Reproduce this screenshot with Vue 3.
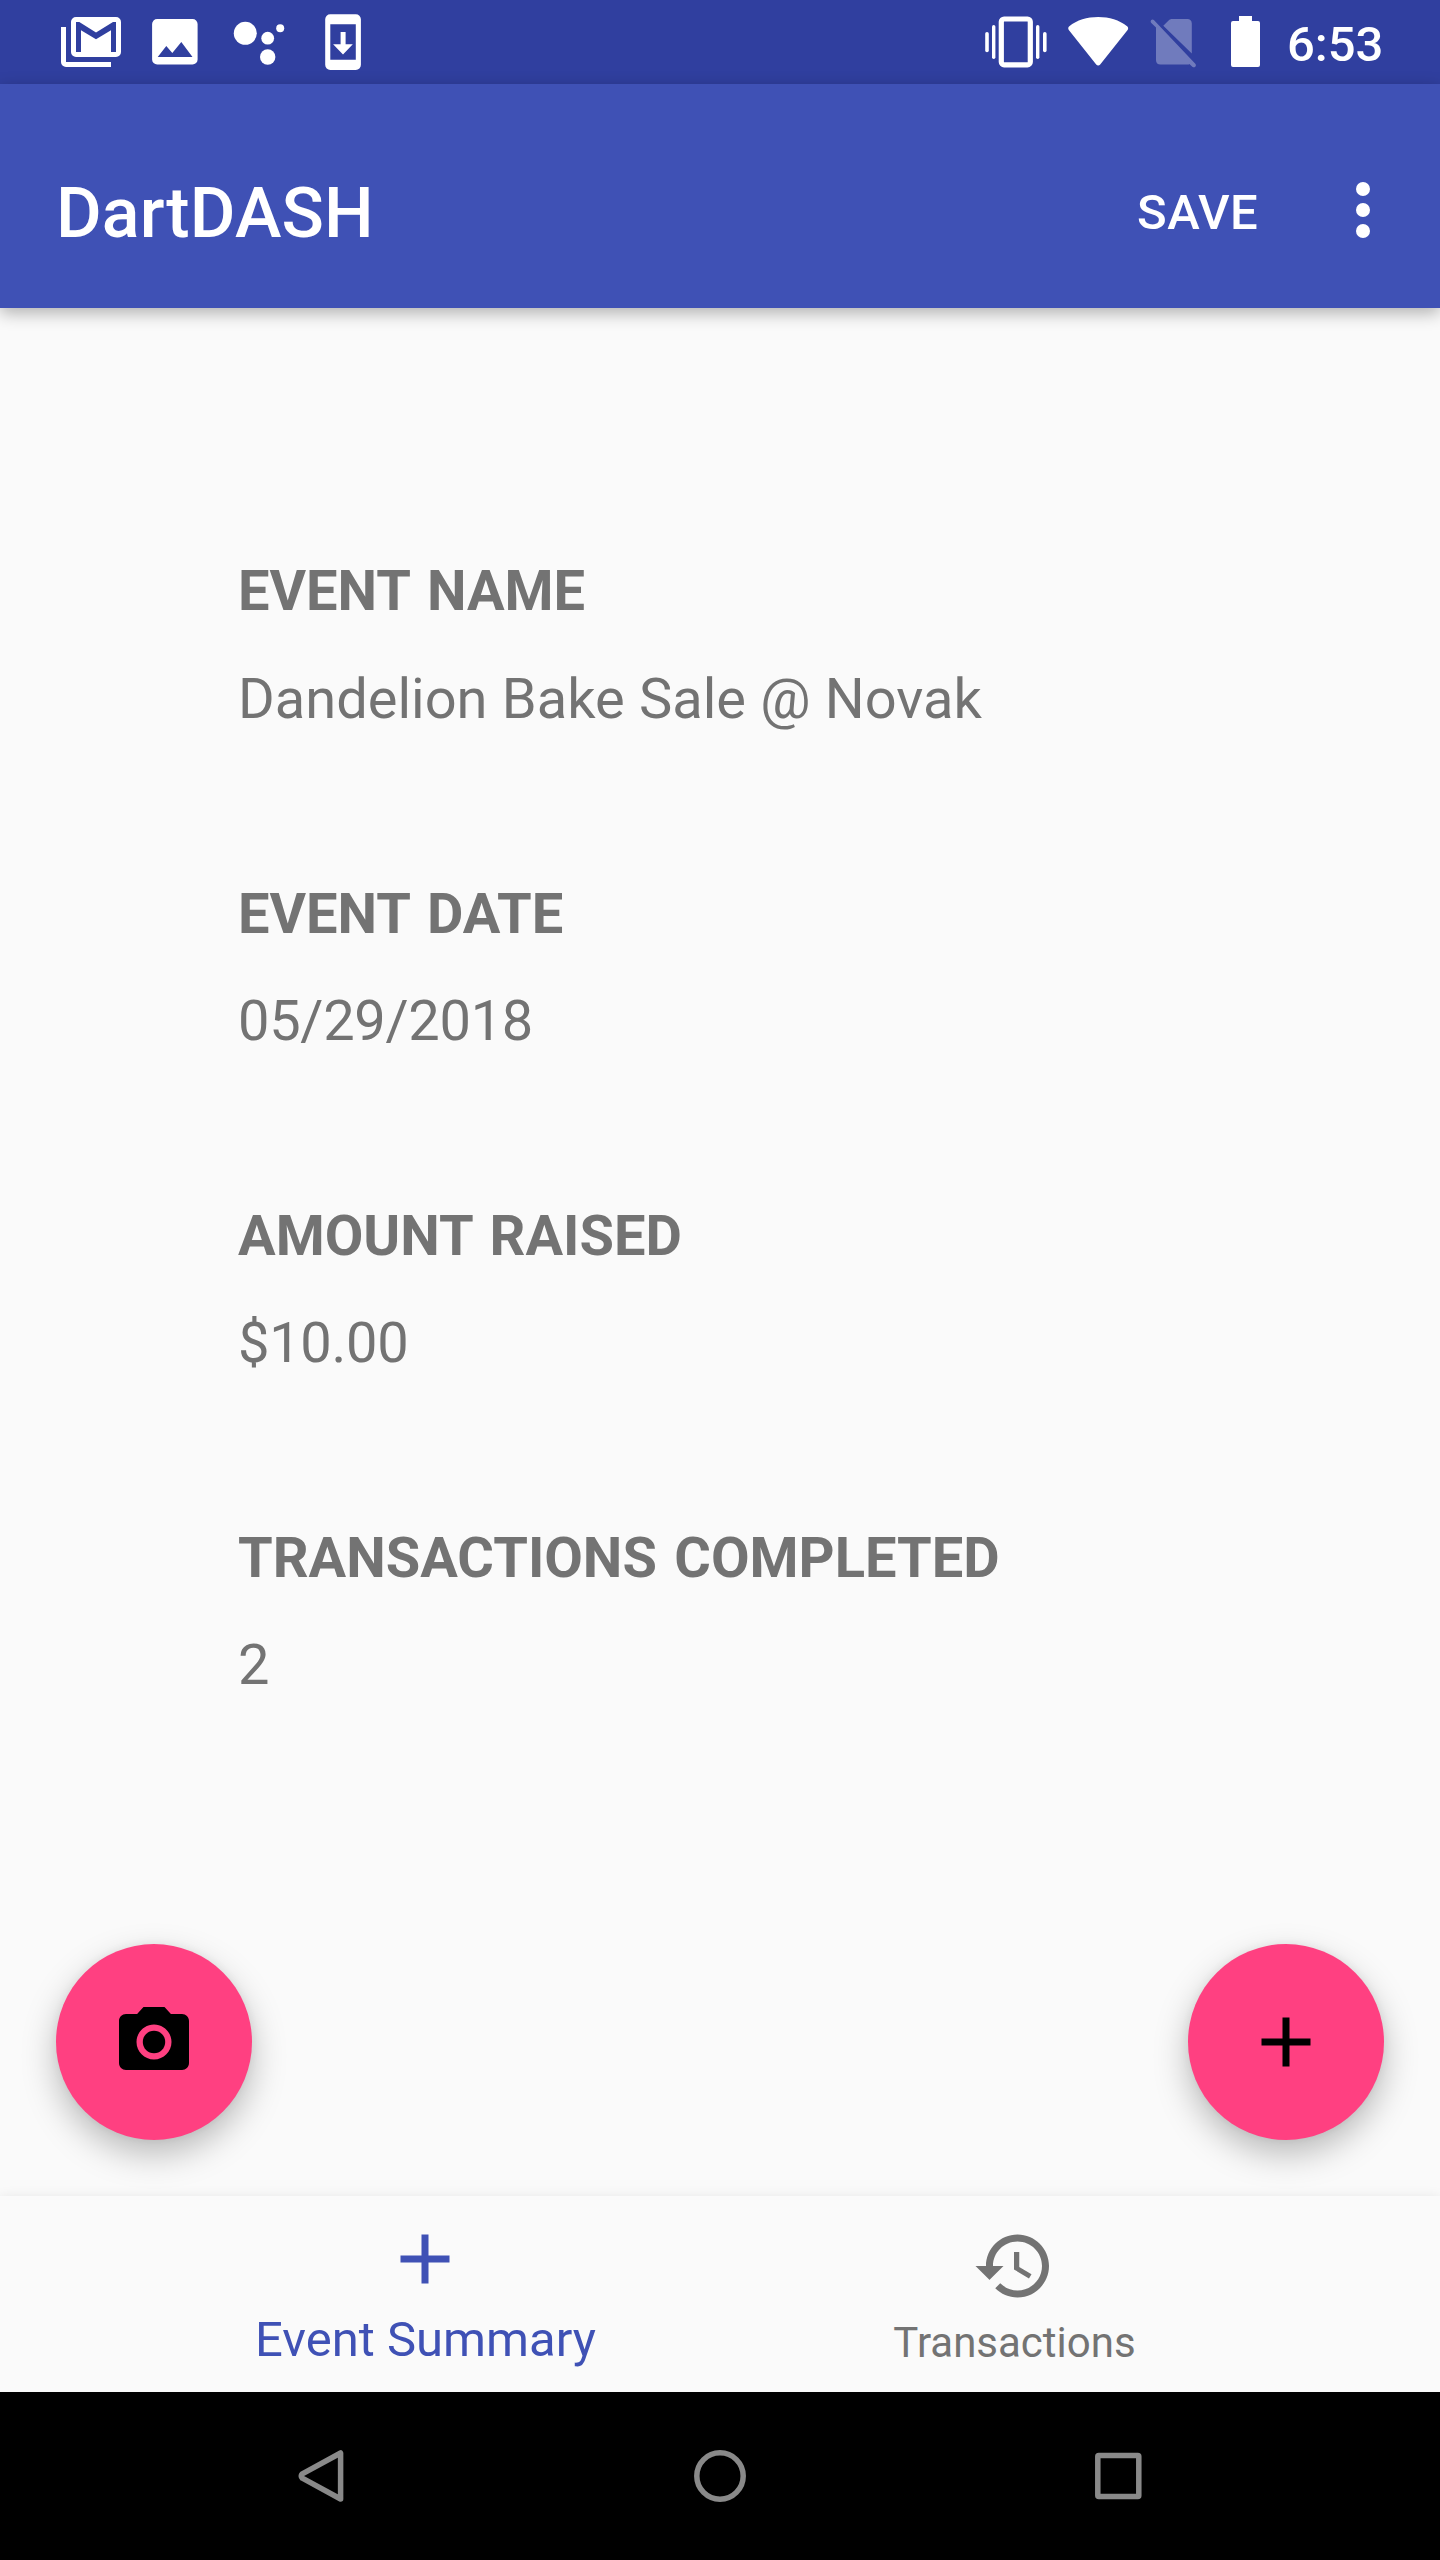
<script setup>
const fields = [
  { label: 'EVENT NAME', value: 'Dandelion Bake Sale @ Novak' },
  { label: 'EVENT DATE', value: '05/29/2018', numeric: true },
  { label: 'AMOUNT RAISED', value: '$10.00', numeric: true },
  { label: 'TRANSACTIONS COMPLETED', value: '2', numeric: true },
]
</script>

<template>
  <div class="screen">
    <div class="status-bar">
      <div class="notifications">
        <svg width="84" height="84" viewBox="49 0 84 84">
          <path fill="#fff" d="M61 27h5v35h45v5H66a5 5 0 0 1-5-5z" />
          <path fill="#fff" fill-rule="evenodd" d="M76 17h40a5 5 0 0 1 5 5v30a5 5 0 0 1-5 5H76a5 5 0 0 1-5-5V22a5 5 0 0 1 5-5zM76 22v30h5V30.3l15 9 15-9V52h5V22h-3L96 32.5 79.3 22z" />
        </svg>
        <svg width="84" height="84" viewBox="133 0 84 84">
          <path fill="#fff" fill-rule="evenodd" d="M157.200 19h35.300a5.100 5.100 0 0 1 5.100 5.100v35.400a5.100 5.100 0 0 1-5.100 5.100h-35.300a5.100 5.100 0 0 1-5.100-5.100V24.100a5.100 5.100 0 0 1 5.100-5.100zM157.700 57h34.800l-11.200-15-9 11-6-7z" />
        </svg>
        <svg width="84" height="84" viewBox="217 0 84 84" fill="#fff">
          <circle cx="245.300" cy="33.300" r="11.500" />
          <circle cx="267.700" cy="38.200" r="6.400" />
          <circle cx="280.200" cy="28.200" r="4" />
          <circle cx="267.700" cy="57" r="7.700" />
        </svg>
        <svg width="84" height="84" viewBox="301 0 84 84">
          <path fill="#fff" fill-rule="evenodd" d="M330.300 14.200h25.500a5.100 5.100 0 0 1 5.100 5.100v45.500a5.100 5.100 0 0 1-5.100 5.100h-25.500a5.100 5.100 0 0 1-5.100-5.100V19.300a5.100 5.100 0 0 1 5.100-5.100zM330.300 24.300v35.400h25.500V24.300z" />
          <path fill="#fff" d="M340.600 32h5v12.300h7.200L343 54.400l-9.900-10.100h7.500z" />
        </svg>
      </div>
      <div class="system">
        <svg width="80" height="84" viewBox="976 0 80 84" fill="#fff">
          <rect x="1001.300" y="19" width="29" height="45.800" rx="2.800" fill="none" stroke="#fff" stroke-width="5.200" />
          <rect x="992" y="25" width="3.400" height="34" rx="1.700" />
          <rect x="985.200" y="32" width="3.600" height="20.300" rx="1.800" />
          <rect x="1036" y="25" width="3.400" height="34" rx="1.700" />
          <rect x="1043" y="32" width="3.600" height="20.300" rx="1.800" />
        </svg>
        <svg width="84" height="84" viewBox="1056 0 84 84">
          <path fill="#fff" d="M1069.300 26.200C1077 20 1087 17 1098.200 17s21 3 28.900 9.200c1.200 1 1.400 2.500.5 3.700l-27.400 34.600c-1.100 1.400-2.900 1.400-4 0l-27.400-34.600c-.9-1.200-.7-2.700.5-3.700z" />
        </svg>
        <svg width="70" height="84" viewBox="1140 0 70 84" opacity=".31">
          <path fill="#fff" d="M1163.300 25.700l5.300-5.200c1-1 2-1.500 3.400-1.500h15.400c2.600 0 4.400 1.800 4.400 4.400v30.200zM1156 27.600l-4.700-4.600c-1.900-2 .8-4.700 2.800-2.800l41.200 43.500c1.800 2-.8 4.900-3 3l-2.900-2.800c-.5.500-1 .7-1.600.7h-27.400c-2.600 0-4.400-1.800-4.400-4.400z" />
        </svg>
        <svg width="71" height="84" viewBox="1210 0 71 84">
          <path fill="#fff" d="M1239 16h13v5h6a2 2 0 0 1 2 2v42a2 2 0 0 1-2 2h-25a2 2 0 0 1-2-2V23a2 2 0 0 1 2-2h6z" />
        </svg>
        <span class="clock">6:53</span>
      </div>
    </div>

    <header class="app-bar">
      <h1>DartDASH</h1>
      <span class="save">SAVE</span>
      <svg class="more" width="14" height="56" viewBox="0 0 14 56" fill="#fff">
        <circle cx="7" cy="7" r="7" />
        <circle cx="7" cy="28" r="7" />
        <circle cx="7" cy="49" r="7" />
      </svg>
    </header>

    <main class="content">
      <section v-for="f in fields" :key="f.label" class="field">
        <div class="label">{{ f.label }}</div>
        <div class="value" :class="{ numeric: f.numeric }">{{ f.value }}</div>
      </section>
      <div class="fabs">
        <button class="fab">
          <svg width="84" height="84" viewBox="0 0 24 24">
            <circle cx="12" cy="12" r="3.200" />
            <path d="M9 2L7.170 4H4c-1.100 0-2 .9-2 2v12c0 1.100.9 2 2 2h16c1.100 0 2-.9 2-2V6c0-1.100-.9-2-2-2h-3.170L15 2H9zm3 15c-2.760 0-5-2.240-5-5s2.240-5 5-5 5 2.240 5 5-2.240 5-5 5z" />
          </svg>
        </button>
        <button class="fab">
          <svg width="84" height="84" viewBox="0 0 24 24">
            <path d="M19 13h-6v6h-2v-6H5v-2h6V5h2v6h6v2z" />
          </svg>
        </button>
      </div>
    </main>

    <nav class="tabs">
      <div class="tab active">
        <svg width="84" height="84" viewBox="0 0 24 24" fill="currentColor">
          <path d="M19 13h-6v6h-2v-6H5v-2h6V5h2v6h6v2z" />
        </svg>
        <span>Event Summary</span>
      </div>
      <div class="tab">
        <svg width="84" height="84" viewBox="0 0 24 24" fill="currentColor">
          <path d="M13 3c-4.970 0-9 4.030-9 9H1l3.890 3.890.07.14L9 12H6c0-3.870 3.130-7 7-7s7 3.130 7 7-3.130 7-7 7c-1.930 0-3.680-.79-4.940-2.060l-1.420 1.420C8.270 19.990 10.510 21 13 21c4.970 0 9-4.030 9-9s-4.030-9-9-9zm-1 5v5l4.280 2.540.72-1.210-3.500-2.080V8H12z" />
        </svg>
        <span>Transactions</span>
      </div>
    </nav>

    <div class="system-nav">
      <div class="key">
        <svg width="56" height="56" viewBox="294 2448 56 56">
          <path d="M340.600 2453v46L302.300 2478.200q-2.200-2.200 0-4.400z" class="outline" />
        </svg>
      </div>
      <div class="key">
        <svg width="56" height="56" viewBox="0 0 56 56">
          <circle cx="28" cy="28" r="23.200" class="outline" />
        </svg>
      </div>
      <div class="key">
        <svg width="56" height="56" viewBox="0 0 56 56">
          <rect x="7.800" y="7.600" width="41" height="41" rx="1" class="outline" />
        </svg>
      </div>
    </div>
  </div>
</template>

<style>
body {
  margin: 0;
}
</style>

<style scoped>
.screen {
  width: 1440px;
  height: 2560px;
  display: flex;
  flex-direction: column;
  overflow: hidden;
  background: #fafafa;
  font-family: Roboto, sans-serif;
}
svg {
  display: block;
  flex: none;
}
.status-bar {
  height: 84px;
  flex: none;
  display: flex;
  justify-content: space-between;
  padding: 0 56px 0 49px;
  background: #303f9f;
}
.notifications,
.system {
  display: flex;
}
.system {
  width: 408px;
}
.clock {
  margin-left: 6px;
  padding-top: 16px;
  font-size: 49px;
  line-height: 58px;
  font-weight: 500;
  color: #fff;
}
.app-bar {
  height: 224px;
  flex: none;
  display: flex;
  align-items: flex-start;
  box-sizing: border-box;
  padding: 0 70px 0 56px;
  background: #3f51b5;
  color: #fff;
  box-shadow: 0 5px 16px rgba(0, 0, 0, 0.3);
  z-index: 1;
}
h1 {
  margin: 88px auto 0 0;
  font-size: 70px;
  line-height: 82px;
  font-weight: 500;
  letter-spacing: 0.15px;
}
.save {
  margin: 100px 98px 0 0;
  font-size: 49px;
  line-height: 58px;
  font-weight: 500;
  letter-spacing: 0.35px;
}
.more {
  margin-top: 98px;
}
.content {
  flex: 1;
  display: flex;
  flex-direction: column;
  padding: 250px 56px 56px;
}
.field {
  margin: 0 182px 149px;
  color: #737373;
  font-size: 56px;
  line-height: 66px;
  white-space: nowrap;
}
.label {
  font-weight: 700;
  margin-bottom: 41px;
  word-spacing: 3.5px;
}
.field:first-child .label {
  margin-bottom: 42px;
}
.value {
  word-spacing: 0.4px;
}
.numeric {
  letter-spacing: -0.3px;
}
.fabs {
  margin-top: auto;
  display: flex;
  justify-content: space-between;
}
.fab {
  width: 196px;
  height: 196px;
  padding: 0;
  border: 0;
  border-radius: 50%;
  background: #ff4081;
  display: flex;
  align-items: center;
  justify-content: center;
  box-shadow: 0 14px 34px rgba(0, 0, 0, 0.26), 0 0 10px rgba(0, 0, 0, 0.06);
}
.tabs {
  height: 196px;
  flex: none;
  display: flex;
  justify-content: center;
  background: #fafafa;
  box-shadow: 0 1px 12px rgba(0, 0, 0, 0.09);
}
.tab {
  width: 589px;
  height: 196px;
  box-sizing: border-box;
  padding-top: 28px;
  display: flex;
  flex-direction: column;
  align-items: center;
  color: #737373;
  font-size: 42px;
  line-height: 50px;
}
.tab svg {
  margin-right: 1px;
}
.tab span {
  margin-top: 10px;
}
.tab.active {
  padding-top: 21px;
  color: #3f51b5;
  font-size: 49px;
  line-height: 58px;
}
.system-nav {
  height: 168px;
  flex: none;
  display: flex;
  align-items: center;
  justify-content: center;
  background: #000;
  z-index: 1;
}
.key {
  width: 398px;
  display: flex;
  justify-content: center;
}
.outline {
  fill: none;
  stroke: #898989;
  stroke-width: 5.5px;
  stroke-linejoin: round;
}
</style>
